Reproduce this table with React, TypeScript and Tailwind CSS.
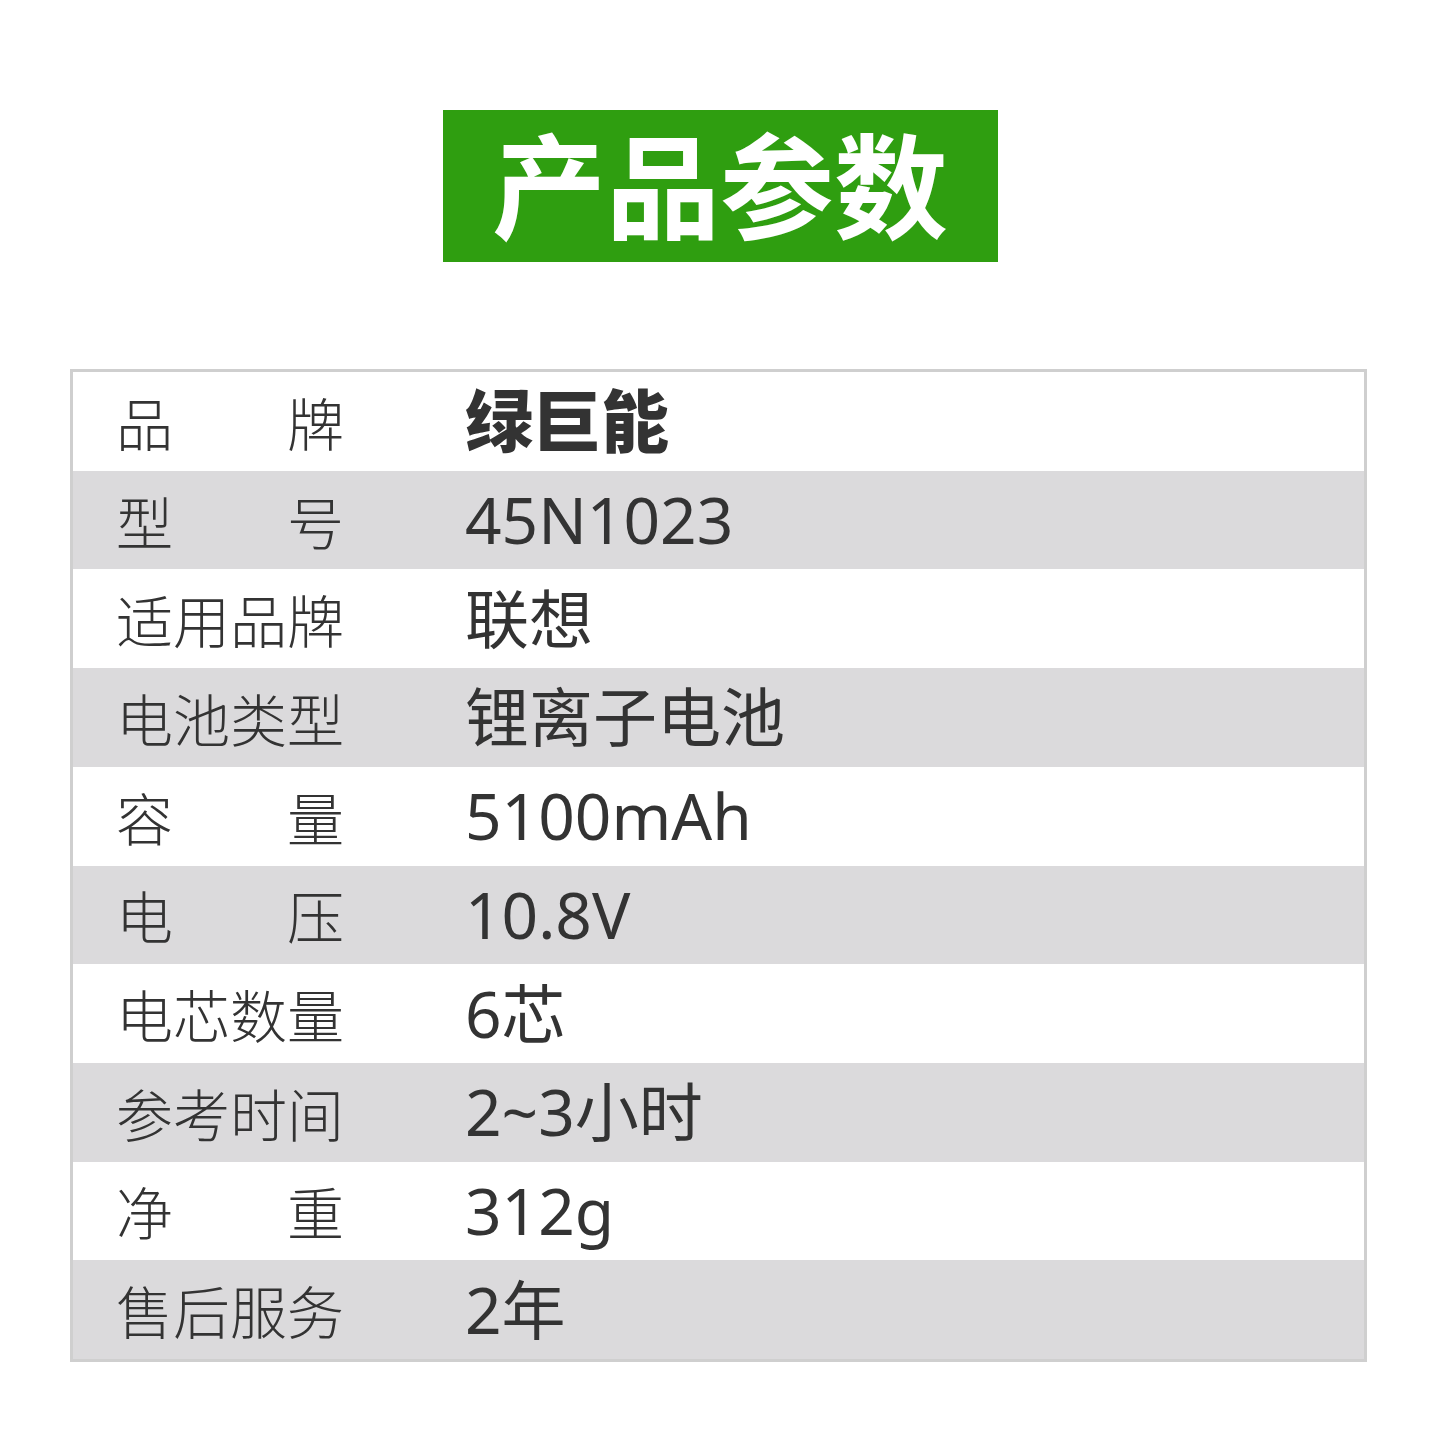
const rows: { label: string; value: string; spread?: boolean; bold?: boolean }[] = [
  { label: "品牌", value: "绿巨能", spread: true, bold: true },
  { label: "型号", value: "45N1023", spread: true },
  { label: "适用品牌", value: "联想" },
  { label: "电池类型", value: "锂离子电池" },
  { label: "容量", value: "5100mAh", spread: true },
  { label: "电压", value: "10.8V", spread: true },
  { label: "电芯数量", value: "6芯" },
  { label: "参考时间", value: "2~3小时" },
  { label: "净重", value: "312g", spread: true },
  { label: "售后服务", value: "2年" }
];

export default function App() {
  return (
    <div
      className="flex h-[1440px] w-[1440px] flex-col items-center bg-white text-[#333333]"
      style={{ fontFamily: '"Noto Sans", "Noto Sans CJK SC", sans-serif' }}
    >
      <div className="mt-[110px] flex h-[152px] w-[555px] items-center justify-center bg-[#2f9e10]">
        <span
          className="-mt-[10px] text-[114px] font-bold leading-none text-white"
          style={{ fontFamily: '"Noto Sans CJK SC", sans-serif' }}
        >
          产品参数
        </span>
      </div>

      <div className="ml-[70px] mt-[107px] flex h-[993px] w-[1297px] flex-col self-start border-[3px] border-[#cfcfcf]">
        {rows.map((row, i) => (
          <div
            key={row.label}
            className={`flex min-h-0 flex-1 basis-0 items-center pl-[43px] ${i % 2 === 1 ? "bg-[#dbdadc]" : "bg-white"}`}
          >
            <div
              className={`flex w-[228px] whitespace-nowrap text-[57px] font-light leading-none ${row.spread ? "justify-between" : ""}`}
              style={{ fontFamily: '"Noto Sans CJK SC", sans-serif' }}
            >
              {row.spread ? (
                <>
                  <span>{row.label[0]}</span>
                  <span>{row.label[1]}</span>
                </>
              ) : (
                <span>{row.label}</span>
              )}
            </div>
            <div
              className={`ml-[121px] whitespace-nowrap leading-none ${row.bold ? "text-[68px] font-black" : "text-[64px]"}`}
            >
              {row.value}
            </div>
          </div>
        ))}
      </div>
    </div>
  );
}
